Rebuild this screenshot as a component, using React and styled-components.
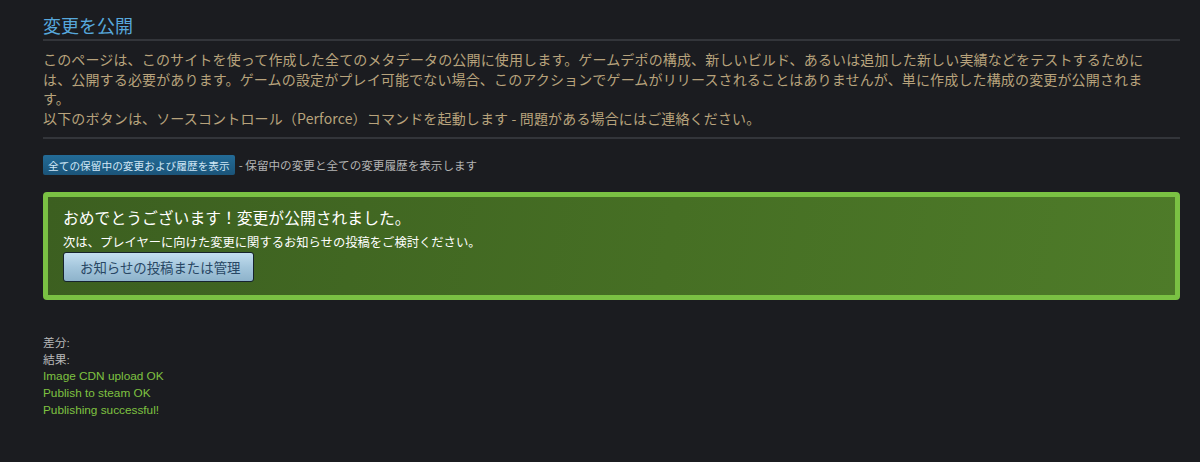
import React from "react";
import styled, { createGlobalStyle } from "styled-components";

const Global = createGlobalStyle`
  html, body { margin: 0; padding: 0; background: #1b1c20; }
  body { font-family: "Noto Sans CJK JP", "Noto Sans", sans-serif; }
`;

const Page = styled.div`
  box-sizing: border-box;
  width: 1200px;
  min-height: 462px;
  padding: 13px 20px 0 43px;
  background: #1b1c20;
`;

const Title = styled.h2`
  margin: 0;
  padding-bottom: 2px;
  font-size: 18px;
  line-height: 24px;
  font-weight: 400;
  color: #57a8dc;
  border-bottom: 2px solid #33353a;
`;

const Intro = styled.div`
  padding: 9px 0 9px;
  border-bottom: 2px solid #33353a;
`;

const Para = styled.p`
  margin: 0;
  max-width: 1115px;
  font-size: 14px;
  line-height: 19.5px;
  letter-spacing: 0.15px;
  color: #b8a37c;
`;

const HistoryRow = styled.div`
  display: flex;
  align-items: center;
  margin-top: 16px;
  gap: 4px;
`;

const HistoryButton = styled.a`
  display: inline-flex;
  align-items: center;
  height: 20px;
  padding: 0 5px;
  font-size: 10.7px;
  color: #cfe6f5;
  background: linear-gradient(180deg, #236b97 0%, #1b5479 100%);
  border-radius: 2px;
  cursor: pointer;
`;

const Hint = styled.span`
  font-size: 11.6px;
  color: #b4b4b4;
`;

const SuccessBox = styled.div`
  box-sizing: border-box;
  margin-top: 17px;
  padding: 11px 15px 13px;
  border: 5px solid #7ac143;
  border-radius: 4px;
  background: linear-gradient(100deg, #3c5f20 0%, #466f24 55%, #4e7b29 100%);
`;

const SuccessTitle = styled.div`
  font-size: 15.8px;
  line-height: 20px;
  color: #ffffff;
`;

const SuccessText = styled.div`
  margin-top: 6px;
  font-size: 12.3px;
  line-height: 16px;
  color: #ffffff;
`;

const AnnounceButton = styled.a`
  display: inline-flex;
  align-items: center;
  box-sizing: border-box;
  margin-top: 2px;
  height: 30px;
  width: 191px;
  padding-left: 16px;
  font-size: 13.4px;
  color: #284764;
  background: linear-gradient(180deg, #c3deef 0%, #a4c6dc 50%, #8eb3cb 100%);
  border: 1px solid #16232e;
  border-radius: 3px;
  cursor: pointer;
`;

const Log = styled.div`
  margin-top: 35px;
  display: flex;
  flex-direction: column;
`;

const LogLine = styled.div`
  font-family: "Liberation Sans", "Noto Sans CJK JP", sans-serif;
  font-size: 11.8px;
  line-height: 16.7px;
  color: ${(p) => (p.$ok ? "#7fc241" : "#b8b8b8")};
`;

export default function App() {
  return (
    <Page>
      <Global />
      <Title>変更を公開</Title>
      <Intro>
        <Para>
          このページは、このサイトを使って作成した全てのメタデータの公開に使用します。ゲームデポの構成、新しいビルド、あるいは追加した新しい実績などをテストするためには、公開する必要があります。ゲームの設定がプレイ可能でない場合、このアクションでゲームがリリースされることはありませんが、単に作成した構成の変更が公開されます。
        </Para>
        <Para>
          以下のボタンは、ソースコントロール（Perforce）コマンドを起動します - 問題がある場合にはご連絡ください。
        </Para>
      </Intro>
      <HistoryRow>
        <HistoryButton>全ての保留中の変更および履歴を表示</HistoryButton>
        <Hint>- 保留中の変更と全ての変更履歴を表示します</Hint>
      </HistoryRow>
      <SuccessBox>
        <SuccessTitle>おめでとうございます！変更が公開されました。</SuccessTitle>
        <SuccessText>次は、プレイヤーに向けた変更に関するお知らせの投稿をご検討ください。</SuccessText>
        <AnnounceButton>お知らせの投稿または管理</AnnounceButton>
      </SuccessBox>
      <Log>
        <LogLine>差分:</LogLine>
        <LogLine>結果:</LogLine>
        <LogLine $ok>Image CDN upload OK</LogLine>
        <LogLine $ok>Publish to steam OK</LogLine>
        <LogLine $ok>Publishing successful!</LogLine>
      </Log>
    </Page>
  );
}
